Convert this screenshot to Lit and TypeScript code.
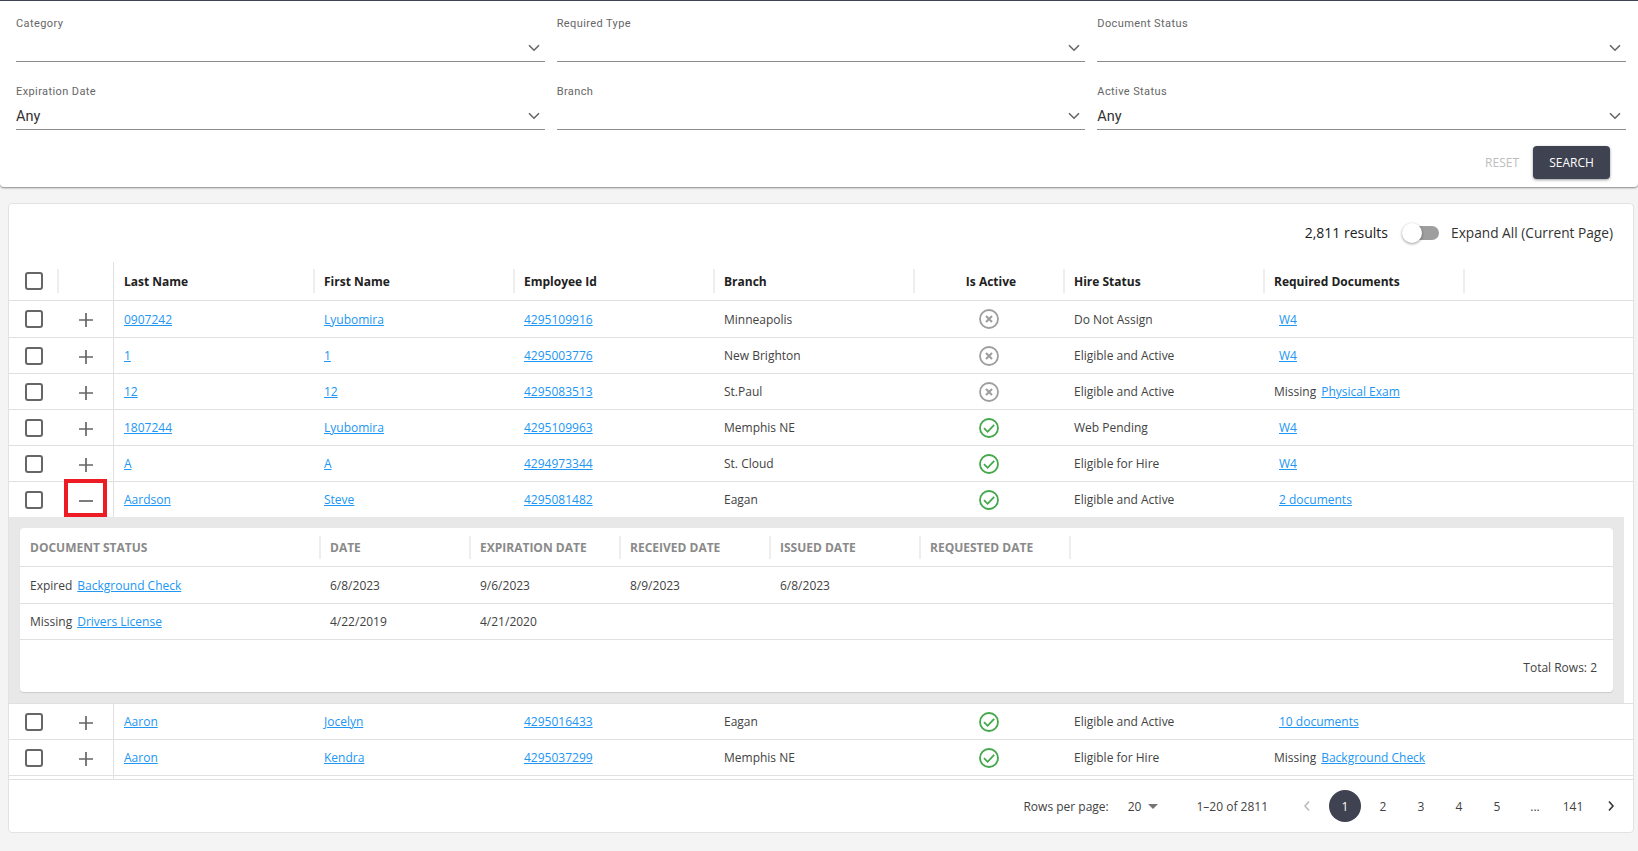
import { LitElement, html, css, svg } from "lit";
import { customElement } from "lit/decorators.js";

type Doc = { pre?: string; link: string };
type Row = { last: string; first: string; id: string; branch: string; active: boolean; hire: string; doc: Doc; open?: boolean; cls?: string };

const rows: Row[] = [
  { last: "0907242", first: "Lyubomira", id: "4295109916", branch: "Minneapolis", active: false, hire: "Do Not Assign", doc: { link: "W4" }, cls: "first" },
  { last: "1", first: "1", id: "4295003776", branch: "New Brighton", active: false, hire: "Eligible and Active", doc: { link: "W4" } },
  { last: "12", first: "12", id: "4295083513", branch: "St.Paul", active: false, hire: "Eligible and Active", doc: { pre: "Missing", link: "Physical Exam" } },
  { last: "1807244", first: "Lyubomira", id: "4295109963", branch: "Memphis NE", active: true, hire: "Web Pending", doc: { link: "W4" } },
  { last: "A", first: "A", id: "4294973344", branch: "St. Cloud", active: true, hire: "Eligible for Hire", doc: { link: "W4" } },
  { last: "Aardson", first: "Steve", id: "4295081482", branch: "Eagan", active: true, hire: "Eligible and Active", doc: { link: "2 documents" }, open: true, cls: "open" },
];
const rowsAfter: Row[] = [
  { last: "Aaron", first: "Jocelyn", id: "4295016433", branch: "Eagan", active: true, hire: "Eligible and Active", doc: { link: "10 documents" } },
  { last: "Aaron", first: "Kendra", id: "4295037299", branch: "Memphis NE", active: true, hire: "Eligible for Hire", doc: { pre: "Missing", link: "Background Check" } },
];

const chevron = html`<svg class="chev" viewBox="0 0 12 8" width="12" height="8"><path d="M1 1.2 6 6.2 11 1.2" fill="none" stroke="#666" stroke-width="1.6"/></svg>`;
const plus = svg`<path d="M7 0v14M0 7h14" stroke="#666" stroke-width="1.7" fill="none"/>`;
const minus = svg`<path d="M0 7h14" stroke="#666" stroke-width="1.7" fill="none"/>`;

@customElement("app-root")
export class AppRoot extends LitElement {
  static styles = css`
    :host { display: block; height: 851px; overflow: hidden; background: #f4f4f4; font-family: "Open Sans", sans-serif; font-size: 12px; color: #424242; }
    * { box-sizing: border-box; }
    a { color: #2196f3; text-decoration: underline; }

    .filters { background: #fff; border-top: 1px solid #3f4250; height: 187px; padding: 15px 12px 0 16px; border-bottom-left-radius: 4px; border-bottom-right-radius: 4px; box-shadow: 0 1px 2px rgba(0,0,0,.45); }
    .grid { display: grid; grid-template-columns: repeat(3, 1fr); column-gap: 12px; row-gap: 22px; }
    .label { font: 11px/16px Roboto, sans-serif; letter-spacing: .4px; color: #666; }
    .control { height: 30px; border-bottom: 1px solid #8c8c8c; display: flex; align-items: center; justify-content: space-between; padding: 3px 5px 0 0; font: 14.5px Roboto, sans-serif; color: #333; }
    .chev { flex: none; }
    .actions { display: flex; justify-content: flex-end; align-items: center; gap: 14px; padding: 16px 16px 0 0; font-size: 12px; }
    .reset { color: #bdbdbd; }
    .search { width: 77px; height: 33px; background: #3f4250; color: #fff; border-radius: 4px; display: flex; align-items: center; justify-content: center; box-shadow: 0 1px 3px rgba(0,0,0,.4); }

    .card { margin: 16px 4px 0 8px; height: 630px; background: #fff; border: 1px solid #e2e2e2; border-radius: 4px; display: flex; flex-direction: column; overflow: hidden; }
    .toolbar { flex: none; height: 56px; display: flex; justify-content: flex-end; align-items: center; padding: 0 20px 0 0; font-size: 14px; color: #212121; }
    .expand { font-size: 13.7px; color: #333; }
    .toggle { position: relative; width: 36px; height: 14px; background: #9e9e9e; border-radius: 7px; margin: 2px 12px 0 15px; }
    .thumb { position: absolute; left: -1px; top: -3px; width: 20px; height: 20px; border-radius: 50%; background: #fff; box-shadow: 0 1px 3px rgba(0,0,0,.4); }

    .list { flex: 1; min-height: 0; overflow: hidden; }
    .row { display: grid; grid-template-columns: 49px 56px 200px 200px 200px 200px 150px 200px 200px 1fr; height: 36px; border-bottom: 1px solid #e0e0e0; align-items: stretch; }
    .row.first { height: 37px; }
    .row.open { height: 35px; border-bottom: 0; }
    .row.head { height: 41px; padding-top: 2px; font-weight: 700; color: #212121; font-size: 12px; }
    .cell { display: flex; align-items: center; padding-left: 10px; position: relative; min-width: 0; white-space: nowrap; }
    .cell.box { padding-left: 16px; }
    .cell.tog { padding-left: 21px; border-right: 1px solid #e0e0e0; }
    .tog svg { margin-top: 2px; }
    .cell.center { justify-content: center; padding-left: 0; }
    .head .cell.center { padding-left: 4px; }
    .cell.doc a.solo { margin-left: 5px; }
    .pre { margin-right: 5px; }
    .head .cell::after { content: ""; position: absolute; right: -1px; top: 7px; bottom: 7px; width: 2px; background: #eee; }
    .head .cell.tog::after { display: none; }
    .head .cell.end::after { display: none; }
    .check { width: 18px; height: 18px; border: 2px solid #666; border-radius: 3px; background: #fff; }
    .mark { position: absolute; left: 6px; right: 6px; top: -3px; bottom: 0; border: 4px solid #ed1c24; }
    .detailwrap { border-bottom: 1px solid #e0e0e0; height: 187px; }
    .detail { background: #e8e8e8; height: 186px; padding: 11px; margin-right: 9px; }
    .sub { background: #fff; height: 164px; border-radius: 4px; box-shadow: 0 1px 1px rgba(0,0,0,.12); display: flex; flex-direction: column; }
    .subrow { display: grid; grid-template-columns: 300px repeat(5, 150px) 1fr; height: 36px; border-bottom: 1px solid #e0e0e0; }
    .subrow.h { height: 39px; font-weight: 700; color: #8a8a8a; text-transform: uppercase; font-size: 12px; }
    .subrow.tall { height: 37px; }
    .subrow .cell { padding-left: 10px; }
    .subrow.h .cell:not(:last-child)::after { content: ""; position: absolute; right: -1px; top: 8px; bottom: 7px; width: 2px; background: #eee; }
    .total { flex: 1; display: flex; align-items: center; justify-content: flex-end; padding: 2px 16px 0 0; }

    .stub { height: 3px; border-bottom: 0; }
    .footer { flex: none; height: 53px; border-top: 1px solid #e0e0e0; display: flex; align-items: center; justify-content: flex-end; padding: 0 3px 0 0; color: #424242; }
    .rpp { margin-right: 19px; }
    .size { display: flex; align-items: center; gap: 7px; margin-right: 38px; }
    .caret { width: 0; height: 0; border-left: 5px solid transparent; border-right: 5px solid transparent; border-top: 5px solid #757575; }
    .range { margin-right: 20px; }
    .pager { display: flex; align-items: center; }
    .pg { width: 38px; height: 32px; display: flex; align-items: center; justify-content: center; }
    .pg.on span { width: 32px; height: 32px; border-radius: 50%; background: #3f4250; color: #fff; display: flex; align-items: center; justify-content: center; }
  `;

  private statusIcon(active: boolean) {
    const col = active ? "#43a84a" : "#9e9e9e";
    return html`<svg width="20" height="20" viewBox="0 0 20 20">
      <circle cx="10" cy="10" r="9" fill="none" stroke=${col} stroke-width="1.8"/>
      ${active
        ? svg`<path d="M5 10.2 8.6 13.8 15.2 6.8" fill="none" stroke=${col} stroke-width="1.8"/>`
        : svg`<path d="M7 7l6 6M13 7l-6 6" fill="none" stroke=${col} stroke-width="2.1"/>`}
    </svg>`;
  }

  private renderRow(r: Row) {
    return html`<div class="row ${r.cls ?? ""}">
      <div class="cell box"><div class="check"></div></div>
      <div class="cell tog">
        <svg width="14" height="14" viewBox="0 0 14 14">${r.open ? minus : plus}</svg>
        ${r.open ? html`<div class="mark"></div>` : ""}
      </div>
      <div class="cell"><a href="#">${r.last}</a></div>
      <div class="cell"><a href="#">${r.first}</a></div>
      <div class="cell"><a href="#">${r.id}</a></div>
      <div class="cell">${r.branch}</div>
      <div class="cell center">${this.statusIcon(r.active)}</div>
      <div class="cell">${r.hire}</div>
      <div class="cell doc">
        ${r.doc.pre ? html`<span class="pre">${r.doc.pre}</span><a href="#">${r.doc.link}</a>` : html`<a class="solo" href="#">${r.doc.link}</a>`}
      </div>
      <div class="cell"></div>
    </div>`;
  }

  private renderDetail() {
    const heads = ["Document Status", "Date", "Expiration Date", "Received Date", "Issued Date", "Requested Date"];
    return html`<div class="detailwrap"><div class="detail"><div class="sub">
      <div class="subrow h">${heads.map((h) => html`<div class="cell">${h}</div>`)}<div class="cell"></div></div>
      <div class="subrow tall">
        <div class="cell"><span class="pre">Expired</span><a href="#">Background Check</a></div>
        <div class="cell">6/8/2023</div><div class="cell">9/6/2023</div><div class="cell">8/9/2023</div><div class="cell">6/8/2023</div><div class="cell"></div><div class="cell"></div>
      </div>
      <div class="subrow">
        <div class="cell"><span class="pre">Missing</span><a href="#">Drivers License</a></div>
        <div class="cell">4/22/2019</div><div class="cell">4/21/2020</div><div class="cell"></div><div class="cell"></div><div class="cell"></div><div class="cell"></div>
      </div>
      <div class="total">Total Rows: 2</div>
    </div></div></div>`;
  }

  render() {
    const fields: [string, string][] = [
      ["Category", ""], ["Required Type", ""], ["Document Status", ""],
      ["Expiration Date", "Any"], ["Branch", ""], ["Active Status", "Any"],
    ];
    const heads = ["Last Name", "First Name", "Employee Id", "Branch"];
    return html`
      <section class="filters">
        <div class="grid">
          ${fields.map(([l, v]) => html`<div>
            <div class="label">${l}</div>
            <div class="control"><span>${v}</span>${chevron}</div>
          </div>`)}
        </div>
        <div class="actions"><span class="reset">RESET</span><div class="search">SEARCH</div></div>
      </section>
      <section class="card">
        <div class="toolbar">
          <span>2,811 results</span>
          <div class="toggle"><div class="thumb"></div></div>
          <span class="expand">Expand All (Current Page)</span>
        </div>
        <div class="list">
          <div class="row head">
            <div class="cell box"><div class="check"></div></div>
            <div class="cell tog"></div>
            ${heads.map((h) => html`<div class="cell">${h}</div>`)}
            <div class="cell center">Is Active</div>
            <div class="cell">Hire Status</div>
            <div class="cell">Required Documents</div>
            <div class="cell end"></div>
          </div>
          ${rows.map((r) => this.renderRow(r))}
          ${this.renderDetail()}
          ${rowsAfter.map((r) => this.renderRow(r))}
          <div class="row stub"><div class="cell"></div><div class="cell tog"></div></div>
        </div>
        <div class="footer">
          <span class="rpp">Rows per page:</span>
          <div class="size"><span>20</span><div class="caret"></div></div>
          <span class="range">1–20 of 2811</span>
          <div class="pager">
            <div class="pg"><svg width="8" height="12" viewBox="0 0 8 12"><path d="M6 1.5 2 6l4 4.5" fill="none" stroke="#bdbdbd" stroke-width="1.6"/></svg></div>
            <div class="pg on"><span>1</span></div>
            ${["2", "3", "4", "5", "...", "141"].map((p) => html`<div class="pg">${p}</div>`)}
            <div class="pg"><svg width="8" height="12" viewBox="0 0 8 12"><path d="M2 1.5 6 6l-4 4.5" fill="none" stroke="#333" stroke-width="1.6"/></svg></div>
          </div>
        </div>
      </section>
    `;
  }
}
